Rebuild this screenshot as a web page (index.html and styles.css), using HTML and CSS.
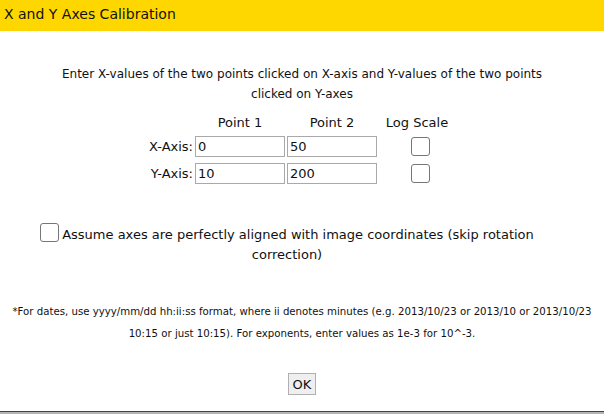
FILE: index.html
```html
<!DOCTYPE html>
<html lang="en">
<head>
    <meta charset="UTF-8">
    <meta name="viewport" content="width=device-width, initial-scale=1.0">
    <title>X and Y Axes Calibration</title>
    <link rel="stylesheet" href="styles.css">
</head>
<body>
    <div class="dialog">
        <div class="dialog-title">X and Y Axes Calibration</div>

        <div class="dialog-body">
            <p class="intro">Enter X-values of the two points clicked on X-axis and Y-values of the two points clicked on Y-axes</p>

            <table class="axes">
                <tr>
                    <th></th>
                    <th>Point 1</th>
                    <th>Point 2</th>
                    <th>Log Scale</th>
                </tr>
                <tr>
                    <td class="label">X-Axis:</td>
                    <td><input type="text" value="0"></td>
                    <td><input type="text" value="50"></td>
                    <td class="check"><input type="checkbox"></td>
                </tr>
                <tr>
                    <td class="label">Y-Axis:</td>
                    <td><input type="text" value="10"></td>
                    <td><input type="text" value="200"></td>
                    <td class="check"><input type="checkbox"></td>
                </tr>
            </table>

            <p class="aligned"><input type="checkbox">Assume axes are perfectly aligned with image coordinates (skip rotation correction)</p>

            <p class="note">*For dates, use yyyy/mm/dd hh:ii:ss format, where ii denotes minutes (e.g. 2013/10/23 or 2013/10 or 2013/10/23 10:15 or just 10:15). For exponents, enter values as 1e-3 for 10^-3.</p>

            <div class="actions">
                <button type="button">OK</button>
            </div>
        </div>
    </div>
    <div class="backdrop"></div>
</body>
</html>
```

FILE: styles.css
```css
* {
    margin: 0;
    padding: 0;
    box-sizing: border-box;
}

body {
    font-family: "DejaVu Sans", Verdana, sans-serif;
    background-color: #fff;
    color: #111;
    width: 604px;
    height: 415px;
    overflow: hidden;
}

.dialog {
    height: 412px;
    border-bottom: 1px solid #444;
}

.dialog-title {
    background-color: #ffd700;
    height: 31px;
    padding: 6px 0 0 4px;
    font-size: 14px;
}

.dialog-body {
    text-align: center;
}

.intro {
    font-size: 12px;
    line-height: 20px;
    padding: 33px 55px 0;
}

.axes {
    margin: 5px auto 0;
    border-collapse: separate;
    border-spacing: 2px 6px;
    font-size: 13px;
}

.axes th {
    font-weight: normal;
    line-height: 15px;
}

.axes td.label {
    text-align: right;
}

.axes input[type="text"] {
    width: 90px;
    height: 21px;
    border: 1px solid #a9a9a9;
    padding: 0 2px;
    font-family: inherit;
    font-size: 13px;
    color: #111;
}

.axes td.check {
    padding-left: 32px;
    padding-right: 25px;
}

input[type="checkbox"] {
    appearance: none;
    width: 19px;
    height: 19px;
    border: 1px solid #767676;
    border-radius: 3px;
    background: #fff;
    vertical-align: middle;
}

.aligned {
    font-size: 13px;
    line-height: 20px;
    padding: 33px 60px 0 30px;
}

.aligned input {
    vertical-align: -3px;
    margin-right: 3px;
}

.note {
    font-size: 10.2px;
    line-height: 22px;
    padding: 36px 4px 0;
}

.actions {
    padding-top: 28px;
}

.actions button {
    font-family: inherit;
    font-size: 13px;
    color: #111;
    background-color: #efefef;
    border: 1px solid #b0b0b0;
    padding: 2px 4px;
    height: 22px;
}

.backdrop {
    height: 2px;
    background-color: #b4b4b4;
}
```
